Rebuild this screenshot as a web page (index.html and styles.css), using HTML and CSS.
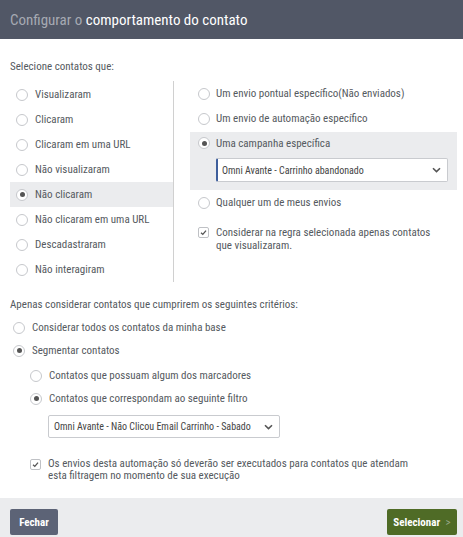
FILE: index.html
```html
<!DOCTYPE html>
<html lang="pt">
<head>
<meta charset="utf-8">
<title>Configurar o comportamento do contato</title>
<link rel="stylesheet" href="styles.css">
</head>
<body>
<div class="modal">
  <div class="header"><span class="muted">Configurar o</span>&nbsp;<span class="strong">comportamento do contato</span></div>
  <div class="content">
    <div class="label first">Selecione contatos que:</div>
    <div class="cols">
      <div class="left">
        <div class="row"><span class="radio"></span>Visualizaram</div>
        <div class="row"><span class="radio"></span>Clicaram</div>
        <div class="row"><span class="radio"></span>Clicaram em uma URL</div>
        <div class="row"><span class="radio"></span>Não visualizaram</div>
        <div class="row active"><span class="radio on"></span>Não clicaram</div>
        <div class="row"><span class="radio"></span>Não clicaram em uma URL</div>
        <div class="row"><span class="radio"></span>Descadastraram</div>
        <div class="row"><span class="radio"></span>Não interagiram</div>
      </div>
      <div class="right">
        <div class="row"><span class="radio"></span>Um envio pontual específico(Não enviados)</div>
        <div class="row"><span class="radio"></span>Um envio de automação específico</div>
        <div class="hl">
          <div class="row short"><span class="radio on"></span>Uma campanha específica</div>
          <div class="select blue">Omni Avante - Carrinho abandonado<span class="chev"><svg width="9" height="6" viewBox="0 0 9 6"><path d="M1 1.2 L4.5 4.6 L8 1.2" fill="none" stroke="#555" stroke-width="1.6"/></svg></span></div>
        </div>
        <div class="row"><span class="radio"></span>Qualquer um de meus envios</div>
        <div class="check-row r"><span class="check"><svg width="9" height="9" viewBox="0 0 9 9"><path d="M2 4.8 L3.8 6.4 L7 2.6" fill="none" stroke="#555" stroke-width="1.3"/></svg></span><span>Considerar na regra selecionada apenas contatos que visualizaram.</span></div>
      </div>
    </div>
    <div class="label second">Apenas considerar contatos que cumprirem os seguintes critérios:</div>
    <div class="row2 lead"><span class="radio"></span>Considerar todos os contatos da minha base</div>
    <div class="row2"><span class="radio on"></span>Segmentar contatos</div>
    <div class="sub">
      <div class="row2"><span class="radio"></span>Contatos que possuam algum dos marcadores</div>
      <div class="row2"><span class="radio on"></span>Contatos que correspondam ao seguinte filtro</div>
      <div class="select filter">Omni Avante - Não Clicou Email Carrinho - Sabado<span class="chev"><svg width="9" height="6" viewBox="0 0 9 6"><path d="M1 1.2 L4.5 4.6 L8 1.2" fill="none" stroke="#555" stroke-width="1.6"/></svg></span></div>
      <div class="check-row b"><span class="check"><svg width="9" height="9" viewBox="0 0 9 9"><path d="M2 4.8 L3.8 6.4 L7 2.6" fill="none" stroke="#555" stroke-width="1.3"/></svg></span><span class="btext">Os envios desta automação só deverão ser executados para contatos que atendam esta filtragem no momento de sua execução</span></div>
    </div>
  </div>
  <div class="footer">
    <button class="btn close">Fechar</button>
    <button class="btn ok">Selecionar <span class="gt">&gt;</span></button>
  </div>
</div>
</body>
</html>
```

FILE: styles.css
```css
* { box-sizing: border-box; }
html, body { margin: 0; padding: 0; }
body {
  font-family: "Liberation Sans Narrow", "Roboto Condensed", Roboto, sans-serif;
  color: #555a60;
  font-size: 11px;
  background: #fff;
}
.modal {
  width: 463px;
  height: 537px;
  display: flex;
  flex-direction: column;
}
.header {
  height: 39px;
  background: #515766;
  display: flex;
  align-items: center;
  padding-left: 10px;
  font-size: 15px;
}
.header .muted { color: #a6aab3; }
.header .strong { color: #ffffff; }
.content {
  flex: 1;
  padding: 0 6px 0 10px;
}
.label { line-height: 13px; }
.label.first { margin-top: 21px; }
.label.second { margin-top: 16px; }
.cols {
  display: grid;
  grid-template-columns: 164px 1fr;
  margin-top: 8px;
}
.left {
  border-right: 1px solid #d0d0d0;
  padding-top: 1px;
}
.row {
  height: 25px;
  display: flex;
  align-items: center;
  padding-left: 6px;
}
.row.active { background: #ebecee; }
.radio {
  width: 12px;
  height: 12px;
  border: 1px solid #c6c8cc;
  border-radius: 50%;
  background: #fff;
  margin-right: 7px;
  flex: none;
  display: flex;
  align-items: center;
  justify-content: center;
}
.radio.on::after {
  content: "";
  width: 5px;
  height: 5px;
  border-radius: 50%;
  background: #555;
}
.right { padding-left: 16px; }
.right .row { padding-left: 8px; }
.right .radio { margin-right: 6px; }
.hl {
  background: #ebecee;
  margin-top: 1px;
  padding-bottom: 8px;
}
.right .row.short { height: 22px; }
.select {
  background: #fff;
  border: 1px solid #c9cbcf;
  border-radius: 2px;
  display: flex;
  align-items: center;
  justify-content: space-between;
  font-size: 10px;
  color: #444;
  white-space: nowrap;
}
.select.blue {
  margin: 4px 9px 0 26px;
  height: 24px;
  border-left: 2px solid #3f5f9c;
  padding: 0 6px 0 4px;
}
.chev { display: flex; align-items: center; }
.check-row {
  display: flex;
  align-items: flex-start;
}
.check {
  width: 11px;
  height: 11px;
  border: 1px solid #bfc1c5;
  border-radius: 2px;
  background: #fff;
  flex: none;
  display: flex;
  align-items: center;
  justify-content: center;
  margin-top: 1px;
  margin-right: 7px;
}
.check-row.r {
  margin-top: 11px;
  padding-left: 8px;
  line-height: 13px;
  padding-right: 10px;
}
.row2 {
  height: 23px;
  display: flex;
  align-items: center;
  padding-left: 3px;
}
.row2.lead { margin-top: 5px; }
.sub { padding-left: 20px; margin-top: 2px; }
.sub .row2 { padding-left: 0; }
.sub .radio { margin-right: 7px; }
.select.filter {
  margin: 5px 0 0 18px;
  width: 232px;
  height: 23px;
  padding: 0 6px 0 5px;
}
.check-row.b {
  margin-top: 20px;
  line-height: 12px;
}
.btext { max-width: 368px; }
.footer {
  height: 39px;
  background: #ebecee;
  display: flex;
  justify-content: space-between;
  align-items: flex-start;
  padding: 11px 6px 0 10px;
}
.btn {
  height: 26px;
  border: none;
  border-radius: 2px;
  font-family: "Liberation Sans Narrow", "Roboto Condensed", Roboto, sans-serif;
  font-weight: bold;
  font-size: 11px;
  color: #fff;
  padding: 0;
}
.btn.close { width: 48px; background: #5c6376; }
.btn.ok { width: 70px; background: #4f6b26; }
.btn .gt { color: #9aa88a; font-weight: normal; margin-left: 3px; }
```
